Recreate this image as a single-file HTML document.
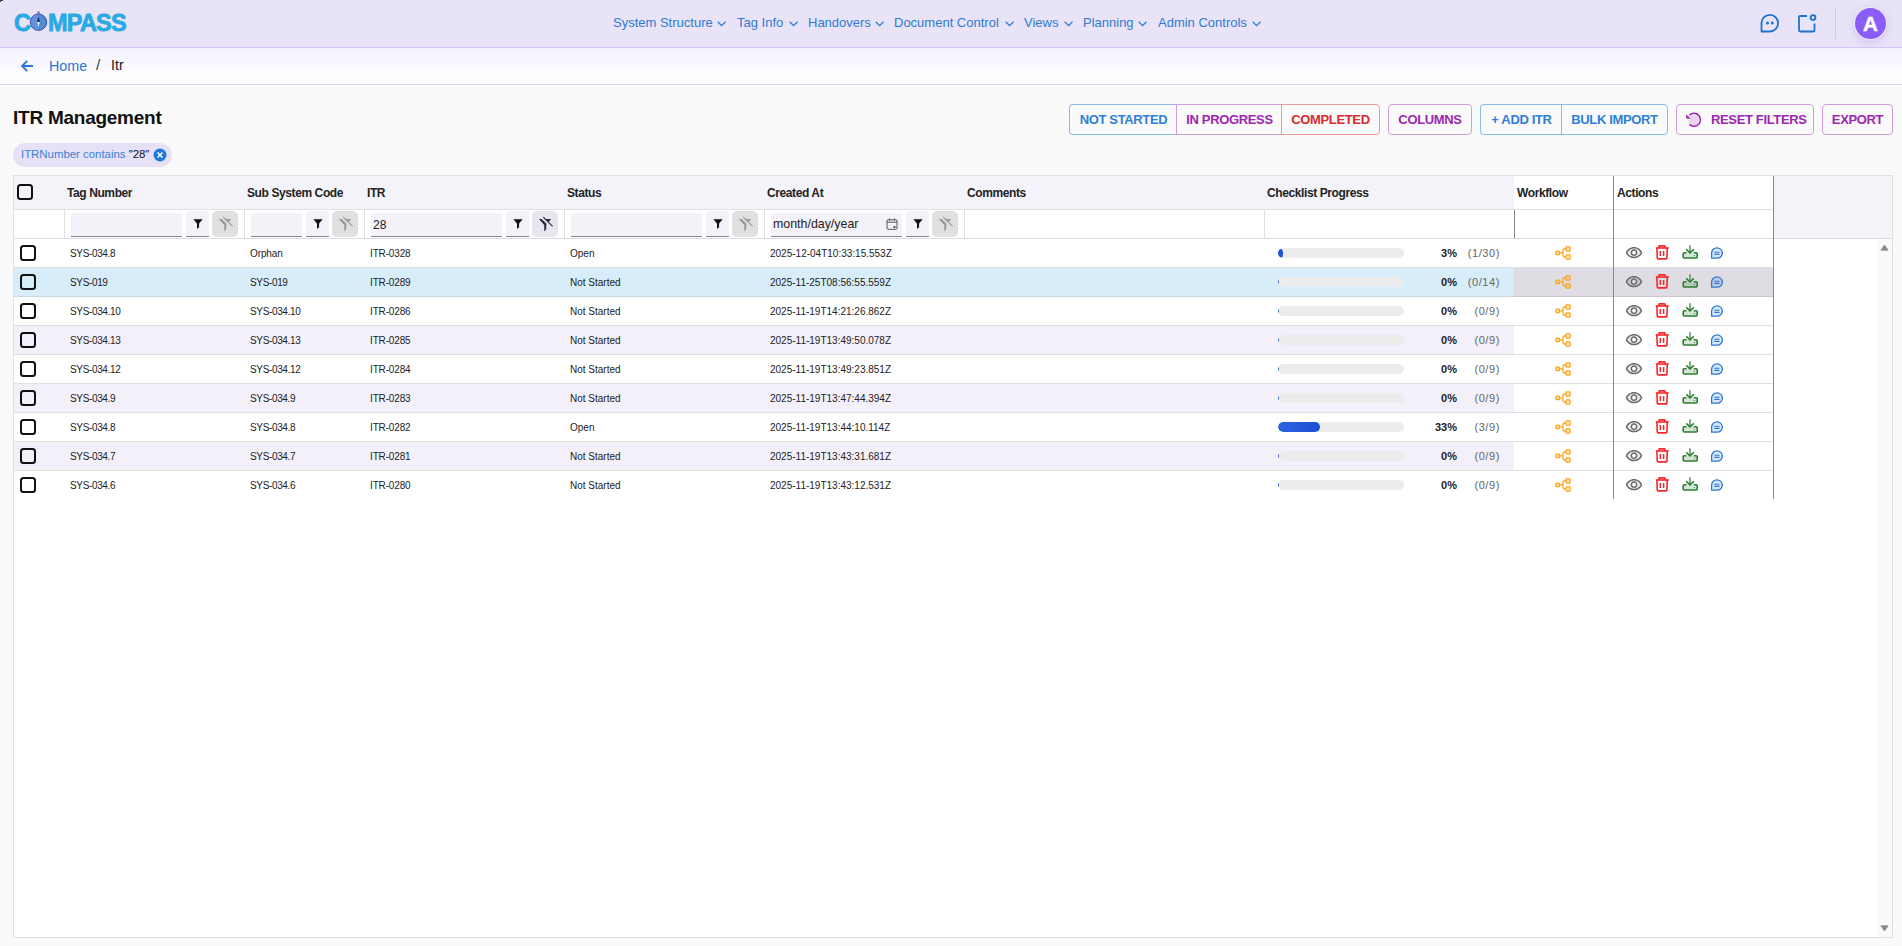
<!DOCTYPE html>
<html><head><meta charset="utf-8"><title>ITR Management</title>
<style>
*{box-sizing:border-box;margin:0;padding:0}
html,body{width:1902px;height:946px;overflow:hidden;background:#fafafa;font-family:"Liberation Sans",sans-serif;color:#1f1f1f}
.a{position:absolute}
#hdr{position:absolute;left:0;top:0;width:1902px;height:48px;background:#e8e3f7;border-bottom:1px solid #d5c6f6}
#crumb{position:absolute;left:0;top:48px;width:1902px;height:37px;background:linear-gradient(180deg,#f5f2fd 0%,#ffffff 100%);border-bottom:1px solid #e2d6f8}
.nav{position:absolute;top:15px;font-size:13px;color:#2f7ad2;white-space:nowrap;line-height:16px}
.chev{position:absolute;top:21px}
.btn{position:absolute;top:104px;height:31px;border:1px solid;font-size:13px;letter-spacing:-0.35px;font-weight:bold;display:flex;align-items:center;justify-content:center;padding-bottom:1px;white-space:nowrap;background:transparent}
.hc{position:absolute;top:0;height:34px;font-size:12px;font-weight:bold;color:#222;letter-spacing:-0.4px;line-height:36px;white-space:nowrap}
.fi{position:absolute;top:2px;height:24px;background:#f4f1f8;border-bottom:1px solid #8a8a8a;border-radius:4px 4px 0 0}
.fb{position:absolute;top:1px;height:26px;width:23px;background:#f4f1f8;border-bottom:1px solid #8a8a8a;border-radius:4px 4px 0 0;display:flex;align-items:center;justify-content:center}
.fc{position:absolute;top:1px;height:26px;width:26px;background:#e0e0e0;border-radius:5px;display:flex;align-items:center;justify-content:center}
.row{position:absolute;left:0;width:1760px;height:29px;border-bottom:1px solid #e0e0e0}
.td{position:absolute;top:0;height:28px;line-height:30px;font-size:10px;letter-spacing:0px;color:#222;white-space:nowrap}
.cb{position:absolute;width:16px;height:16px;border:2px solid #111;border-radius:3.5px}
</style></head>
<body>
<div id="hdr">
<div class="a" style="left:14px;top:10px;font-size:23.5px;font-weight:bold;color:#2aa9e4;letter-spacing:-0.6px;-webkit-text-stroke:0.8px #2aa9e4;line-height:26px;white-space:nowrap">C</div>
<svg class="a" style="left:29px;top:10px" width="19" height="22" viewBox="0 0 19 22">
 <circle cx="9.5" cy="2.6" r="1.5" fill="#8a8aa0"/>
 <circle cx="9.5" cy="12.2" r="8.2" fill="#4a8fd0" stroke="#3b48a8" stroke-width="1"/>
 <path d="M9.5 4.5 A7.7 7.7 0 0 0 9.5 19.9z" fill="#6690dc"/>
 <path d="M9.5 6.5 L11 12 L9.5 17.8 L8 12z" fill="#1d2a5a"/>
 <path d="M8 12 L11 12 L9.5 17.8z" fill="#c8f4ff"/>
</svg>
<div class="a" style="left:48px;top:10px;font-size:23.5px;font-weight:bold;color:#2aa9e4;letter-spacing:-0.8px;-webkit-text-stroke:0.8px #2aa9e4;line-height:26px;white-space:nowrap">MPASS</div>
<div class="nav" style="left:613px">System Structure</div>
<svg class="chev" style="left:717px" width="9" height="6" viewBox="0 0 9 6"><path d="M0.7 0.8l3.9 3.9 3.9-3.9" fill="none" stroke="#2f7ad0" stroke-width="1.3"/></svg>
<div class="nav" style="left:737px">Tag Info</div>
<svg class="chev" style="left:789px" width="9" height="6" viewBox="0 0 9 6"><path d="M0.7 0.8l3.9 3.9 3.9-3.9" fill="none" stroke="#2f7ad0" stroke-width="1.3"/></svg>
<div class="nav" style="left:808px">Handovers</div>
<svg class="chev" style="left:875px" width="9" height="6" viewBox="0 0 9 6"><path d="M0.7 0.8l3.9 3.9 3.9-3.9" fill="none" stroke="#2f7ad0" stroke-width="1.3"/></svg>
<div class="nav" style="left:894px">Document Control</div>
<svg class="chev" style="left:1005px" width="9" height="6" viewBox="0 0 9 6"><path d="M0.7 0.8l3.9 3.9 3.9-3.9" fill="none" stroke="#2f7ad0" stroke-width="1.3"/></svg>
<div class="nav" style="left:1024px">Views</div>
<svg class="chev" style="left:1064px" width="9" height="6" viewBox="0 0 9 6"><path d="M0.7 0.8l3.9 3.9 3.9-3.9" fill="none" stroke="#2f7ad0" stroke-width="1.3"/></svg>
<div class="nav" style="left:1083px">Planning</div>
<svg class="chev" style="left:1138px" width="9" height="6" viewBox="0 0 9 6"><path d="M0.7 0.8l3.9 3.9 3.9-3.9" fill="none" stroke="#2f7ad0" stroke-width="1.3"/></svg>
<div class="nav" style="left:1158px">Admin Controls</div>
<svg class="chev" style="left:1252px" width="9" height="6" viewBox="0 0 9 6"><path d="M0.7 0.8l3.9 3.9 3.9-3.9" fill="none" stroke="#2f7ad0" stroke-width="1.3"/></svg>
<svg class="a" style="left:1760px;top:13px" width="20" height="20" viewBox="0 0 20 20" fill="none" stroke="#1a73d0" stroke-width="1.8"><path d="M1.5 18.5V10A8.3 8.3 0 1 1 9.8 18.5z" stroke-linejoin="round"/><circle cx="7.5" cy="10" r="0.6" fill="#1a73d0"/><circle cx="12.3" cy="10" r="0.6" fill="#1a73d0"/></svg>
<svg class="a" style="left:1797px;top:13px" width="20" height="20" viewBox="0 0 20 20" fill="none" stroke="#1a73d0" stroke-width="1.8" stroke-linejoin="round"><path d="M10 3H3.2Q2 3 2 4.2V17.3Q2 18.5 3.2 18.5H16.3Q17.5 18.5 17.5 17.3V10.5"/><circle cx="16" cy="4.6" r="2.4"/></svg>
<div class="a" style="left:1835px;top:8px;width:1px;height:31px;background:#d4c4f2"></div>
<div class="a" style="left:1855px;top:8px;width:31px;height:31px;border-radius:50%;background:#8b5cf6;box-shadow:0 0 0 1px #f1ebfc,0 2px 8px rgba(130,90,230,0.3);color:#fff;font-weight:bold;font-size:20.5px;line-height:32px;text-align:center;-webkit-text-stroke:0.5px #fff">A</div>
</div>
<div id="crumb">
<svg class="a" style="left:20px;top:11px" width="14" height="14" viewBox="0 0 14 14" fill="none" stroke="#2a76d2" stroke-width="1.8"><path d="M13 7H2.2M7.2 1.8L2 7 7.2 12.2"/></svg>
<div class="a" style="left:49px;top:9px;font-size:14.3px;color:#2a78d4;line-height:18px">Home</div>
<div class="a" style="left:96px;top:8px;font-size:15.5px;color:#444;line-height:18px">/</div>
<div class="a" style="left:111px;top:8px;font-size:14.3px;color:#222;line-height:18px">Itr</div>
</div>
<div class="a" style="left:0;top:0;width:3px;height:1px;background:#3a3a3a"></div><div class="a" style="left:0;top:1px;width:1px;height:1px;background:#555"></div>
<div class="a" style="left:13px;top:107px;font-size:19px;font-weight:bold;color:#111;letter-spacing:-0.25px;line-height:22px;white-space:nowrap">ITR Management</div>
<div class="a" style="left:13px;top:143px;width:159px;height:24px;border-radius:12px;background:#e7e1f7"></div>
<div class="a" style="left:21px;top:147px;font-size:11.4px;line-height:15px;white-space:nowrap;color:#3a7fd0">ITRNumber contains <span style="color:#111">"28"</span></div>
<svg class="a" style="left:153px;top:148px" width="14" height="14" viewBox="0 0 14 14"><circle cx="7" cy="7" r="6.5" fill="#1e7ad6"/><path d="M4.5 4.5l5 5M9.5 4.5l-5 5" stroke="#fff" stroke-width="1.5"/></svg>
<div class="btn" style="left:1069px;width:108px;color:#2f7fd6;border-color:#8bbcec;border-radius:4px 0 0 4px;border-right:none">NOT STARTED</div>
<div class="btn" style="left:1176px;width:106px;color:#9c27b0;border-color:#d29ddd;border-radius:0;border-right:none">IN PROGRESS</div>
<div class="btn" style="left:1281px;width:99px;color:#d32f2f;border-color:#ec9a9a;border-radius:0 4px 4px 0">COMPLETED</div>
<div class="btn" style="left:1388px;width:84px;color:#9c27b0;border-color:#d29ddd;border-radius:4px">COLUMNS</div>
<div class="btn" style="left:1480px;width:82px;color:#2f7fd6;border-color:#8bbcec;border-radius:4px 0 0 4px;border-right:none">+ ADD ITR</div>
<div class="btn" style="left:1561px;width:107px;color:#2f7fd6;border-color:#8bbcec;border-radius:0 4px 4px 0">BULK IMPORT</div>
<div class="btn" style="left:1676px;width:138px;color:#9c27b0;border-color:#d29ddd;border-radius:4px"><svg width="17" height="16" viewBox="0 0 17 16" style="position:absolute;left:8px;top:7px"><circle cx="8.6" cy="8.3" r="5.4" fill="#e9d5ee"/><path d="M4.5 3.1A6.5 6.5 0 1 1 4.3 12.4" fill="none" stroke="#9c27b0" stroke-width="1.5"/><path d="M1.2 2.2L1.3 6.8 5.5 6.4Z" fill="#9c27b0"/></svg><span style="position:absolute;left:34px;top:7px">RESET FILTERS</span></div>
<div class="btn" style="left:1822px;width:71px;color:#9c27b0;border-color:#d29ddd;border-radius:4px">EXPORT</div>
<div class="a" style="left:13px;top:175px;width:1880px;height:763px;background:#fff;border:1px solid #e0e0e0"></div>
<div class="a" style="left:14px;top:176px;width:1878px;height:62px;background:#f5f3fa"></div>
<div class="a" style="left:14px;top:209px;width:1500px;height:29px;background:#fff"></div>
<div class="a" style="left:1514px;top:176px;width:260px;height:62px;background:#fff"></div>
<div class="a" style="left:14px;top:209px;width:1760px;height:1px;background:#e0e0e0"></div>
<div class="a" style="left:14px;top:238px;width:1878px;height:1px;background:#dedae3"></div>
<div class="a" style="left:64px;top:210px;width:1px;height:28px;background:#e0e0e0"></div>
<div class="a" style="left:244px;top:210px;width:1px;height:28px;background:#e0e0e0"></div>
<div class="a" style="left:364px;top:210px;width:1px;height:28px;background:#e0e0e0"></div>
<div class="a" style="left:564px;top:210px;width:1px;height:28px;background:#e0e0e0"></div>
<div class="a" style="left:764px;top:210px;width:1px;height:28px;background:#e0e0e0"></div>
<div class="a" style="left:964px;top:210px;width:1px;height:28px;background:#e0e0e0"></div>
<div class="a" style="left:1264px;top:210px;width:1px;height:28px;background:#e0e0e0"></div>
<div class="a" style="left:1514px;top:210px;width:1px;height:28px;background:#e0e0e0"></div>
<div class="a" style="left:1514px;top:210px;width:1px;height:28px;background:#888"></div>
<div class="hc" style="left:67px;top:175px">Tag Number</div>
<div class="hc" style="left:247px;top:175px">Sub System Code</div>
<div class="hc" style="left:367px;top:175px">ITR</div>
<div class="hc" style="left:567px;top:175px">Status</div>
<div class="hc" style="left:767px;top:175px">Created At</div>
<div class="hc" style="left:967px;top:175px">Comments</div>
<div class="hc" style="left:1267px;top:175px">Checklist Progress</div>
<div class="hc" style="left:1517px;top:175px">Workflow</div>
<div class="hc" style="left:1617px;top:175px">Actions</div>
<div class="cb" style="left:17px;top:184px"></div>
<div class="fi" style="left:71px;top:213px;width:111px">
</div>
<div class="fb" style="left:186px;top:211px"><svg width="12" height="12" viewBox="0 0 12 12"><path d="M1.3 1.2H10.6L7.1 5.6V9.3L5 11V5.6Z" fill="#111"/></svg></div>
<div class="fc" style="left:212px;top:211px;background:#e0e0e0"><svg width="16" height="17" viewBox="0 0 16 17" style="margin-left:1px;margin-top:1px"><path d="M0.9 3.1L3.6 2.9L8.4 7.6L8.2 13.3L6.3 15.5L6.2 9Z" fill="#9a9a9a"/><path d="M7 3.1H13.1L10.7 5.9Z" fill="#9a9a9a"/><path d="M5.3 1.1L14.6 10.4" stroke="#9a9a9a" stroke-width="1.2"/></svg></div>
<div class="fi" style="left:251px;top:213px;width:51px">
</div>
<div class="fb" style="left:306px;top:211px"><svg width="12" height="12" viewBox="0 0 12 12"><path d="M1.3 1.2H10.6L7.1 5.6V9.3L5 11V5.6Z" fill="#111"/></svg></div>
<div class="fc" style="left:332px;top:211px;background:#e0e0e0"><svg width="16" height="17" viewBox="0 0 16 17" style="margin-left:1px;margin-top:1px"><path d="M0.9 3.1L3.6 2.9L8.4 7.6L8.2 13.3L6.3 15.5L6.2 9Z" fill="#9a9a9a"/><path d="M7 3.1H13.1L10.7 5.9Z" fill="#9a9a9a"/><path d="M5.3 1.1L14.6 10.4" stroke="#9a9a9a" stroke-width="1.2"/></svg></div>
<div class="fi" style="left:371px;top:213px;width:131px">
<span style="position:absolute;left:2px;top:4px;font-size:12px;color:#222;line-height:16px">28</span>
</div>
<div class="fb" style="left:506px;top:211px"><svg width="12" height="12" viewBox="0 0 12 12"><path d="M1.3 1.2H10.6L7.1 5.6V9.3L5 11V5.6Z" fill="#111"/></svg></div>
<div class="fc" style="left:532px;top:211px;background:#e9e5ee"><svg width="16" height="17" viewBox="0 0 16 17" style="margin-left:1px;margin-top:1px"><path d="M0.9 3.1L3.6 2.9L8.4 7.6L8.2 13.3L6.3 15.5L6.2 9Z" fill="#2b2b3b"/><path d="M7 3.1H13.1L10.7 5.9Z" fill="#2b2b3b"/><path d="M5.3 1.1L14.6 10.4" stroke="#2b2b3b" stroke-width="1.2"/></svg></div>
<div class="fi" style="left:571px;top:213px;width:131px">
</div>
<div class="fb" style="left:706px;top:211px"><svg width="12" height="12" viewBox="0 0 12 12"><path d="M1.3 1.2H10.6L7.1 5.6V9.3L5 11V5.6Z" fill="#111"/></svg></div>
<div class="fc" style="left:732px;top:211px;background:#e0e0e0"><svg width="16" height="17" viewBox="0 0 16 17" style="margin-left:1px;margin-top:1px"><path d="M0.9 3.1L3.6 2.9L8.4 7.6L8.2 13.3L6.3 15.5L6.2 9Z" fill="#9a9a9a"/><path d="M7 3.1H13.1L10.7 5.9Z" fill="#9a9a9a"/><path d="M5.3 1.1L14.6 10.4" stroke="#9a9a9a" stroke-width="1.2"/></svg></div>
<div class="fi" style="left:771px;top:213px;width:131px">
<span style="position:absolute;left:2px;top:3px;font-size:12.4px;color:#222;line-height:16px">month/day/year</span>
<svg style="position:absolute;left:115px;top:5px" width="12" height="12" viewBox="0 0 12 12" fill="none" stroke="#555" stroke-width="1"><rect x="1" y="1.8" width="10" height="9.5" rx="1"/><path d="M1 4.2h10M3.5 0.5v2M8.5 0.5v2"/><rect x="7.5" y="8" width="2" height="2" fill="#555" stroke="none"/></svg>
</div>
<div class="fb" style="left:906px;top:211px"><svg width="12" height="12" viewBox="0 0 12 12"><path d="M1.3 1.2H10.6L7.1 5.6V9.3L5 11V5.6Z" fill="#111"/></svg></div>
<div class="fc" style="left:932px;top:211px;background:#e0e0e0"><svg width="16" height="17" viewBox="0 0 16 17" style="margin-left:1px;margin-top:1px"><path d="M0.9 3.1L3.6 2.9L8.4 7.6L8.2 13.3L6.3 15.5L6.2 9Z" fill="#9a9a9a"/><path d="M7 3.1H13.1L10.7 5.9Z" fill="#9a9a9a"/><path d="M5.3 1.1L14.6 10.4" stroke="#9a9a9a" stroke-width="1.2"/></svg></div>
<div class="a" style="left:14px;top:239px;width:1500px;height:29px;background:#fff;border-bottom:1px solid #e0e0e0"></div>
<div class="a" style="left:1514px;top:239px;width:260px;height:29px;background:#fff;border-bottom:1px solid #e0e0e0"></div>
<div class="cb" style="left:20px;top:245px"></div>
<div class="td" style="left:70px;top:239px;letter-spacing:-0.35px">SYS-034.8</div>
<div class="td" style="left:250px;top:239px;letter-spacing:-0.1px">Orphan</div>
<div class="td" style="left:370px;top:239px;letter-spacing:-0.15px">ITR-0328</div>
<div class="td" style="left:570px;top:239px;letter-spacing:0">Open</div>
<div class="td" style="left:770px;top:239px;letter-spacing:0">2025-12-04T10:33:15.553Z</div>
<div class="a" style="left:1278px;top:248px;width:126px;height:10px;border-radius:5px;background:#ececec;overflow:hidden"><div style="width:5px;height:9px;margin-top:0.5px;border-radius:50%;background:#1f4fe0"></div></div>
<div class="a" style="left:1407px;width:50px;top:239px;height:28px;line-height:28px;font-size:11px;font-weight:bold;color:#222;text-align:right">3%</div>
<div class="a" style="left:1450px;width:50px;top:239px;height:28px;line-height:28px;font-size:11px;letter-spacing:0.6px;color:#666;text-align:right;margin-right:-0.6px">(1/30)</div>
<svg class="a" style="left:1555px;top:245px" width="17" height="15" viewBox="0 0 17 15" fill="none" stroke="#ffa414" stroke-width="1.3"><rect x="1" y="6.2" width="3.4" height="3.4" rx="0.6" fill="rgba(255,164,20,0.22)"/><rect x="10.85" y="1.85" width="4.3" height="4.3" rx="0.8" fill="rgba(255,164,20,0.22)"/><rect x="10.85" y="9.85" width="4.3" height="4.3" rx="0.8" fill="rgba(255,164,20,0.22)"/><path d="M4.4 7.9H8M10.85 4H9.4Q8 4 8 5.4V10.6Q8 12 9.4 12H10.85"/></svg>
<svg class="a" style="left:1625px;top:244px" width="18" height="18" viewBox="0 0 24 24"><path fill="rgba(0,0,0,0.09)" fill-rule="evenodd" d="M12 6c3.79 0 7.17 2.13 8.82 5.5C19.17 14.87 15.79 17 12 17s-7.17-2.13-8.82-5.5C4.83 8.13 8.21 6 12 6zM12 8.2a3.3 3.3 0 1 0 0.01 0z"/><path fill="#6a6a6a" d="M12 6c3.79 0 7.17 2.13 8.82 5.5C19.17 14.87 15.79 17 12 17s-7.17-2.13-8.82-5.5C4.83 8.13 8.21 6 12 6m0-2C7 4 2.73 7.11 1 11.5 2.73 15.89 7 19 12 19s9.27-3.11 11-7.5C21.27 7.11 17 4 12 4zm0 5c1.38 0 2.5 1.12 2.5 2.5S13.38 14 12 14s-2.5-1.12-2.5-2.5S10.62 9 12 9m0-2c-2.48 0-4.5 2.02-4.5 4.5S9.520 16 12 16s4.5-2.02 4.5-4.5S14.48 7 12 7z"/></svg>
<svg class="a" style="left:1655px;top:244px" width="15" height="17" viewBox="0 0 15 17" fill="none" stroke="#f8262b" stroke-width="1.6" stroke-linejoin="round"><path d="M4 4V2.4Q4 1.9 4.5 1.9H9.5Q10 1.9 10 2.4V4"/><path d="M0.8 4H13.8"/><path d="M1.9 4L2.3 14.2Q2.4 14.9 3.1 14.9H11.1Q11.8 14.9 11.9 14.2L12.3 4"/><path d="M5.3 7V11.9M8.6 7V11.9" stroke-width="1.5"/></svg>
<svg class="a" style="left:1682px;top:245px" width="17" height="15" viewBox="0 0 17 15"><path d="M1.2 7.7H15.2V13H1.2Z" fill="rgba(46,125,50,0.2)"/><path d="M4.6 7.7H2.2Q1.2 7.7 1.2 8.7V12Q1.2 13 2.2 13H14.2Q15.2 13 15.2 12V8.7Q15.2 7.7 14.2 7.7H11.7" fill="none" stroke="#2e7d32" stroke-width="1.6"/><path d="M8 0.2V7.6" stroke="#5a9a5d" stroke-width="1.6"/><path d="M4.2 4.4L8 7.9 11.8 4.4" fill="none" stroke="#2e7d32" stroke-width="1.5"/><path d="M11.4 10.2L13 10.2 12.8 11.6Z" fill="#2e7d32"/></svg>
<svg class="a" style="left:1710px;top:247px" width="14" height="13" viewBox="0 0 14 13"><path d="M1.6 11.2V6.1A5.4 5.15 0 1 1 7 11.2Z" fill="rgba(42,120,214,0.18)" stroke="#2a78d6" stroke-width="1.3" stroke-linejoin="round"/><path d="M4.3 5.3H9.5M4.3 7.4H9.5" stroke="#2a78d6" stroke-width="1.1"/></svg>
<div class="a" style="left:14px;top:268px;width:1500px;height:29px;background:#d8edfa;border-bottom:1px solid #c9dae4"></div>
<div class="a" style="left:1514px;top:268px;width:260px;height:29px;background:#e0dce3;border-bottom:1px solid #cbc7cf"></div>
<div class="cb" style="left:20px;top:274px"></div>
<div class="td" style="left:70px;top:268px;letter-spacing:-0.35px">SYS-019</div>
<div class="td" style="left:250px;top:268px;letter-spacing:-0.35px">SYS-019</div>
<div class="td" style="left:370px;top:268px;letter-spacing:-0.15px">ITR-0289</div>
<div class="td" style="left:570px;top:268px;letter-spacing:0">Not Started</div>
<div class="td" style="left:770px;top:268px;letter-spacing:0">2025-11-25T08:56:55.559Z</div>
<div class="a" style="left:1278px;top:277px;width:126px;height:10px;border-radius:5px;background:#ececec;overflow:hidden"><div style="width:1.4px;height:4.6px;margin-top:2.7px;border-radius:50%;background:#3b66e2"></div></div>
<div class="a" style="left:1407px;width:50px;top:268px;height:28px;line-height:28px;font-size:11px;font-weight:bold;color:#222;text-align:right">0%</div>
<div class="a" style="left:1450px;width:50px;top:268px;height:28px;line-height:28px;font-size:11px;letter-spacing:0.6px;color:#666;text-align:right;margin-right:-0.6px">(0/14)</div>
<svg class="a" style="left:1555px;top:274px" width="17" height="15" viewBox="0 0 17 15" fill="none" stroke="#ffa414" stroke-width="1.3"><rect x="1" y="6.2" width="3.4" height="3.4" rx="0.6" fill="rgba(255,164,20,0.22)"/><rect x="10.85" y="1.85" width="4.3" height="4.3" rx="0.8" fill="rgba(255,164,20,0.22)"/><rect x="10.85" y="9.85" width="4.3" height="4.3" rx="0.8" fill="rgba(255,164,20,0.22)"/><path d="M4.4 7.9H8M10.85 4H9.4Q8 4 8 5.4V10.6Q8 12 9.4 12H10.85"/></svg>
<svg class="a" style="left:1625px;top:273px" width="18" height="18" viewBox="0 0 24 24"><path fill="rgba(0,0,0,0.09)" fill-rule="evenodd" d="M12 6c3.79 0 7.17 2.13 8.82 5.5C19.17 14.87 15.79 17 12 17s-7.17-2.13-8.82-5.5C4.83 8.13 8.21 6 12 6zM12 8.2a3.3 3.3 0 1 0 0.01 0z"/><path fill="#6a6a6a" d="M12 6c3.79 0 7.17 2.13 8.82 5.5C19.17 14.87 15.79 17 12 17s-7.17-2.13-8.82-5.5C4.83 8.13 8.21 6 12 6m0-2C7 4 2.73 7.11 1 11.5 2.73 15.89 7 19 12 19s9.27-3.11 11-7.5C21.27 7.11 17 4 12 4zm0 5c1.38 0 2.5 1.12 2.5 2.5S13.38 14 12 14s-2.5-1.12-2.5-2.5S10.62 9 12 9m0-2c-2.48 0-4.5 2.02-4.5 4.5S9.520 16 12 16s4.5-2.02 4.5-4.5S14.48 7 12 7z"/></svg>
<svg class="a" style="left:1655px;top:273px" width="15" height="17" viewBox="0 0 15 17" fill="none" stroke="#f8262b" stroke-width="1.6" stroke-linejoin="round"><path d="M4 4V2.4Q4 1.9 4.5 1.9H9.5Q10 1.9 10 2.4V4"/><path d="M0.8 4H13.8"/><path d="M1.9 4L2.3 14.2Q2.4 14.9 3.1 14.9H11.1Q11.8 14.9 11.9 14.2L12.3 4"/><path d="M5.3 7V11.9M8.6 7V11.9" stroke-width="1.5"/></svg>
<svg class="a" style="left:1682px;top:274px" width="17" height="15" viewBox="0 0 17 15"><path d="M1.2 7.7H15.2V13H1.2Z" fill="rgba(46,125,50,0.2)"/><path d="M4.6 7.7H2.2Q1.2 7.7 1.2 8.7V12Q1.2 13 2.2 13H14.2Q15.2 13 15.2 12V8.7Q15.2 7.7 14.2 7.7H11.7" fill="none" stroke="#2e7d32" stroke-width="1.6"/><path d="M8 0.2V7.6" stroke="#5a9a5d" stroke-width="1.6"/><path d="M4.2 4.4L8 7.9 11.8 4.4" fill="none" stroke="#2e7d32" stroke-width="1.5"/><path d="M11.4 10.2L13 10.2 12.8 11.6Z" fill="#2e7d32"/></svg>
<svg class="a" style="left:1710px;top:276px" width="14" height="13" viewBox="0 0 14 13"><path d="M1.6 11.2V6.1A5.4 5.15 0 1 1 7 11.2Z" fill="rgba(42,120,214,0.18)" stroke="#2a78d6" stroke-width="1.3" stroke-linejoin="round"/><path d="M4.3 5.3H9.5M4.3 7.4H9.5" stroke="#2a78d6" stroke-width="1.1"/></svg>
<div class="a" style="left:14px;top:297px;width:1500px;height:29px;background:#fff;border-bottom:1px solid #e0e0e0"></div>
<div class="a" style="left:1514px;top:297px;width:260px;height:29px;background:#fff;border-bottom:1px solid #e0e0e0"></div>
<div class="cb" style="left:20px;top:303px"></div>
<div class="td" style="left:70px;top:297px;letter-spacing:-0.35px">SYS-034.10</div>
<div class="td" style="left:250px;top:297px;letter-spacing:-0.35px">SYS-034.10</div>
<div class="td" style="left:370px;top:297px;letter-spacing:-0.15px">ITR-0286</div>
<div class="td" style="left:570px;top:297px;letter-spacing:0">Not Started</div>
<div class="td" style="left:770px;top:297px;letter-spacing:0">2025-11-19T14:21:26.862Z</div>
<div class="a" style="left:1278px;top:306px;width:126px;height:10px;border-radius:5px;background:#ececec;overflow:hidden"><div style="width:1.4px;height:4.6px;margin-top:2.7px;border-radius:50%;background:#3b66e2"></div></div>
<div class="a" style="left:1407px;width:50px;top:297px;height:28px;line-height:28px;font-size:11px;font-weight:bold;color:#222;text-align:right">0%</div>
<div class="a" style="left:1450px;width:50px;top:297px;height:28px;line-height:28px;font-size:11px;letter-spacing:0.6px;color:#666;text-align:right;margin-right:-0.6px">(0/9)</div>
<svg class="a" style="left:1555px;top:303px" width="17" height="15" viewBox="0 0 17 15" fill="none" stroke="#ffa414" stroke-width="1.3"><rect x="1" y="6.2" width="3.4" height="3.4" rx="0.6" fill="rgba(255,164,20,0.22)"/><rect x="10.85" y="1.85" width="4.3" height="4.3" rx="0.8" fill="rgba(255,164,20,0.22)"/><rect x="10.85" y="9.85" width="4.3" height="4.3" rx="0.8" fill="rgba(255,164,20,0.22)"/><path d="M4.4 7.9H8M10.85 4H9.4Q8 4 8 5.4V10.6Q8 12 9.4 12H10.85"/></svg>
<svg class="a" style="left:1625px;top:302px" width="18" height="18" viewBox="0 0 24 24"><path fill="rgba(0,0,0,0.09)" fill-rule="evenodd" d="M12 6c3.79 0 7.17 2.13 8.82 5.5C19.17 14.87 15.79 17 12 17s-7.17-2.13-8.82-5.5C4.83 8.13 8.21 6 12 6zM12 8.2a3.3 3.3 0 1 0 0.01 0z"/><path fill="#6a6a6a" d="M12 6c3.79 0 7.17 2.13 8.82 5.5C19.17 14.87 15.79 17 12 17s-7.17-2.13-8.82-5.5C4.83 8.13 8.21 6 12 6m0-2C7 4 2.73 7.11 1 11.5 2.73 15.89 7 19 12 19s9.27-3.11 11-7.5C21.27 7.11 17 4 12 4zm0 5c1.38 0 2.5 1.12 2.5 2.5S13.38 14 12 14s-2.5-1.12-2.5-2.5S10.62 9 12 9m0-2c-2.48 0-4.5 2.02-4.5 4.5S9.520 16 12 16s4.5-2.02 4.5-4.5S14.48 7 12 7z"/></svg>
<svg class="a" style="left:1655px;top:302px" width="15" height="17" viewBox="0 0 15 17" fill="none" stroke="#f8262b" stroke-width="1.6" stroke-linejoin="round"><path d="M4 4V2.4Q4 1.9 4.5 1.9H9.5Q10 1.9 10 2.4V4"/><path d="M0.8 4H13.8"/><path d="M1.9 4L2.3 14.2Q2.4 14.9 3.1 14.9H11.1Q11.8 14.9 11.9 14.2L12.3 4"/><path d="M5.3 7V11.9M8.6 7V11.9" stroke-width="1.5"/></svg>
<svg class="a" style="left:1682px;top:303px" width="17" height="15" viewBox="0 0 17 15"><path d="M1.2 7.7H15.2V13H1.2Z" fill="rgba(46,125,50,0.2)"/><path d="M4.6 7.7H2.2Q1.2 7.7 1.2 8.7V12Q1.2 13 2.2 13H14.2Q15.2 13 15.2 12V8.7Q15.2 7.7 14.2 7.7H11.7" fill="none" stroke="#2e7d32" stroke-width="1.6"/><path d="M8 0.2V7.6" stroke="#5a9a5d" stroke-width="1.6"/><path d="M4.2 4.4L8 7.9 11.8 4.4" fill="none" stroke="#2e7d32" stroke-width="1.5"/><path d="M11.4 10.2L13 10.2 12.8 11.6Z" fill="#2e7d32"/></svg>
<svg class="a" style="left:1710px;top:305px" width="14" height="13" viewBox="0 0 14 13"><path d="M1.6 11.2V6.1A5.4 5.15 0 1 1 7 11.2Z" fill="rgba(42,120,214,0.18)" stroke="#2a78d6" stroke-width="1.3" stroke-linejoin="round"/><path d="M4.3 5.3H9.5M4.3 7.4H9.5" stroke="#2a78d6" stroke-width="1.1"/></svg>
<div class="a" style="left:14px;top:326px;width:1500px;height:29px;background:#f3f0fa;border-bottom:1px solid #e0e0e0"></div>
<div class="a" style="left:1514px;top:326px;width:260px;height:29px;background:#fff;border-bottom:1px solid #e0e0e0"></div>
<div class="cb" style="left:20px;top:332px"></div>
<div class="td" style="left:70px;top:326px;letter-spacing:-0.35px">SYS-034.13</div>
<div class="td" style="left:250px;top:326px;letter-spacing:-0.35px">SYS-034.13</div>
<div class="td" style="left:370px;top:326px;letter-spacing:-0.15px">ITR-0285</div>
<div class="td" style="left:570px;top:326px;letter-spacing:0">Not Started</div>
<div class="td" style="left:770px;top:326px;letter-spacing:0">2025-11-19T13:49:50.078Z</div>
<div class="a" style="left:1278px;top:335px;width:126px;height:10px;border-radius:5px;background:#ececec;overflow:hidden"><div style="width:1.4px;height:4.6px;margin-top:2.7px;border-radius:50%;background:#3b66e2"></div></div>
<div class="a" style="left:1407px;width:50px;top:326px;height:28px;line-height:28px;font-size:11px;font-weight:bold;color:#222;text-align:right">0%</div>
<div class="a" style="left:1450px;width:50px;top:326px;height:28px;line-height:28px;font-size:11px;letter-spacing:0.6px;color:#666;text-align:right;margin-right:-0.6px">(0/9)</div>
<svg class="a" style="left:1555px;top:332px" width="17" height="15" viewBox="0 0 17 15" fill="none" stroke="#ffa414" stroke-width="1.3"><rect x="1" y="6.2" width="3.4" height="3.4" rx="0.6" fill="rgba(255,164,20,0.22)"/><rect x="10.85" y="1.85" width="4.3" height="4.3" rx="0.8" fill="rgba(255,164,20,0.22)"/><rect x="10.85" y="9.85" width="4.3" height="4.3" rx="0.8" fill="rgba(255,164,20,0.22)"/><path d="M4.4 7.9H8M10.85 4H9.4Q8 4 8 5.4V10.6Q8 12 9.4 12H10.85"/></svg>
<svg class="a" style="left:1625px;top:331px" width="18" height="18" viewBox="0 0 24 24"><path fill="rgba(0,0,0,0.09)" fill-rule="evenodd" d="M12 6c3.79 0 7.17 2.13 8.82 5.5C19.17 14.87 15.79 17 12 17s-7.17-2.13-8.82-5.5C4.83 8.13 8.21 6 12 6zM12 8.2a3.3 3.3 0 1 0 0.01 0z"/><path fill="#6a6a6a" d="M12 6c3.79 0 7.17 2.13 8.82 5.5C19.17 14.87 15.79 17 12 17s-7.17-2.13-8.82-5.5C4.83 8.13 8.21 6 12 6m0-2C7 4 2.73 7.11 1 11.5 2.73 15.89 7 19 12 19s9.27-3.11 11-7.5C21.27 7.11 17 4 12 4zm0 5c1.38 0 2.5 1.12 2.5 2.5S13.38 14 12 14s-2.5-1.12-2.5-2.5S10.62 9 12 9m0-2c-2.48 0-4.5 2.02-4.5 4.5S9.520 16 12 16s4.5-2.02 4.5-4.5S14.48 7 12 7z"/></svg>
<svg class="a" style="left:1655px;top:331px" width="15" height="17" viewBox="0 0 15 17" fill="none" stroke="#f8262b" stroke-width="1.6" stroke-linejoin="round"><path d="M4 4V2.4Q4 1.9 4.5 1.9H9.5Q10 1.9 10 2.4V4"/><path d="M0.8 4H13.8"/><path d="M1.9 4L2.3 14.2Q2.4 14.9 3.1 14.9H11.1Q11.8 14.9 11.9 14.2L12.3 4"/><path d="M5.3 7V11.9M8.6 7V11.9" stroke-width="1.5"/></svg>
<svg class="a" style="left:1682px;top:332px" width="17" height="15" viewBox="0 0 17 15"><path d="M1.2 7.7H15.2V13H1.2Z" fill="rgba(46,125,50,0.2)"/><path d="M4.6 7.7H2.2Q1.2 7.7 1.2 8.7V12Q1.2 13 2.2 13H14.2Q15.2 13 15.2 12V8.7Q15.2 7.7 14.2 7.7H11.7" fill="none" stroke="#2e7d32" stroke-width="1.6"/><path d="M8 0.2V7.6" stroke="#5a9a5d" stroke-width="1.6"/><path d="M4.2 4.4L8 7.9 11.8 4.4" fill="none" stroke="#2e7d32" stroke-width="1.5"/><path d="M11.4 10.2L13 10.2 12.8 11.6Z" fill="#2e7d32"/></svg>
<svg class="a" style="left:1710px;top:334px" width="14" height="13" viewBox="0 0 14 13"><path d="M1.6 11.2V6.1A5.4 5.15 0 1 1 7 11.2Z" fill="rgba(42,120,214,0.18)" stroke="#2a78d6" stroke-width="1.3" stroke-linejoin="round"/><path d="M4.3 5.3H9.5M4.3 7.4H9.5" stroke="#2a78d6" stroke-width="1.1"/></svg>
<div class="a" style="left:14px;top:355px;width:1500px;height:29px;background:#fff;border-bottom:1px solid #e0e0e0"></div>
<div class="a" style="left:1514px;top:355px;width:260px;height:29px;background:#fff;border-bottom:1px solid #e0e0e0"></div>
<div class="cb" style="left:20px;top:361px"></div>
<div class="td" style="left:70px;top:355px;letter-spacing:-0.35px">SYS-034.12</div>
<div class="td" style="left:250px;top:355px;letter-spacing:-0.35px">SYS-034.12</div>
<div class="td" style="left:370px;top:355px;letter-spacing:-0.15px">ITR-0284</div>
<div class="td" style="left:570px;top:355px;letter-spacing:0">Not Started</div>
<div class="td" style="left:770px;top:355px;letter-spacing:0">2025-11-19T13:49:23.851Z</div>
<div class="a" style="left:1278px;top:364px;width:126px;height:10px;border-radius:5px;background:#ececec;overflow:hidden"><div style="width:1.4px;height:4.6px;margin-top:2.7px;border-radius:50%;background:#3b66e2"></div></div>
<div class="a" style="left:1407px;width:50px;top:355px;height:28px;line-height:28px;font-size:11px;font-weight:bold;color:#222;text-align:right">0%</div>
<div class="a" style="left:1450px;width:50px;top:355px;height:28px;line-height:28px;font-size:11px;letter-spacing:0.6px;color:#666;text-align:right;margin-right:-0.6px">(0/9)</div>
<svg class="a" style="left:1555px;top:361px" width="17" height="15" viewBox="0 0 17 15" fill="none" stroke="#ffa414" stroke-width="1.3"><rect x="1" y="6.2" width="3.4" height="3.4" rx="0.6" fill="rgba(255,164,20,0.22)"/><rect x="10.85" y="1.85" width="4.3" height="4.3" rx="0.8" fill="rgba(255,164,20,0.22)"/><rect x="10.85" y="9.85" width="4.3" height="4.3" rx="0.8" fill="rgba(255,164,20,0.22)"/><path d="M4.4 7.9H8M10.85 4H9.4Q8 4 8 5.4V10.6Q8 12 9.4 12H10.85"/></svg>
<svg class="a" style="left:1625px;top:360px" width="18" height="18" viewBox="0 0 24 24"><path fill="rgba(0,0,0,0.09)" fill-rule="evenodd" d="M12 6c3.79 0 7.17 2.13 8.82 5.5C19.17 14.87 15.79 17 12 17s-7.17-2.13-8.82-5.5C4.83 8.13 8.21 6 12 6zM12 8.2a3.3 3.3 0 1 0 0.01 0z"/><path fill="#6a6a6a" d="M12 6c3.79 0 7.17 2.13 8.82 5.5C19.17 14.87 15.79 17 12 17s-7.17-2.13-8.82-5.5C4.83 8.13 8.21 6 12 6m0-2C7 4 2.73 7.11 1 11.5 2.73 15.89 7 19 12 19s9.27-3.11 11-7.5C21.27 7.11 17 4 12 4zm0 5c1.38 0 2.5 1.12 2.5 2.5S13.38 14 12 14s-2.5-1.12-2.5-2.5S10.62 9 12 9m0-2c-2.48 0-4.5 2.02-4.5 4.5S9.520 16 12 16s4.5-2.02 4.5-4.5S14.48 7 12 7z"/></svg>
<svg class="a" style="left:1655px;top:360px" width="15" height="17" viewBox="0 0 15 17" fill="none" stroke="#f8262b" stroke-width="1.6" stroke-linejoin="round"><path d="M4 4V2.4Q4 1.9 4.5 1.9H9.5Q10 1.9 10 2.4V4"/><path d="M0.8 4H13.8"/><path d="M1.9 4L2.3 14.2Q2.4 14.9 3.1 14.9H11.1Q11.8 14.9 11.9 14.2L12.3 4"/><path d="M5.3 7V11.9M8.6 7V11.9" stroke-width="1.5"/></svg>
<svg class="a" style="left:1682px;top:361px" width="17" height="15" viewBox="0 0 17 15"><path d="M1.2 7.7H15.2V13H1.2Z" fill="rgba(46,125,50,0.2)"/><path d="M4.6 7.7H2.2Q1.2 7.7 1.2 8.7V12Q1.2 13 2.2 13H14.2Q15.2 13 15.2 12V8.7Q15.2 7.7 14.2 7.7H11.7" fill="none" stroke="#2e7d32" stroke-width="1.6"/><path d="M8 0.2V7.6" stroke="#5a9a5d" stroke-width="1.6"/><path d="M4.2 4.4L8 7.9 11.8 4.4" fill="none" stroke="#2e7d32" stroke-width="1.5"/><path d="M11.4 10.2L13 10.2 12.8 11.6Z" fill="#2e7d32"/></svg>
<svg class="a" style="left:1710px;top:363px" width="14" height="13" viewBox="0 0 14 13"><path d="M1.6 11.2V6.1A5.4 5.15 0 1 1 7 11.2Z" fill="rgba(42,120,214,0.18)" stroke="#2a78d6" stroke-width="1.3" stroke-linejoin="round"/><path d="M4.3 5.3H9.5M4.3 7.4H9.5" stroke="#2a78d6" stroke-width="1.1"/></svg>
<div class="a" style="left:14px;top:384px;width:1500px;height:29px;background:#f3f0fa;border-bottom:1px solid #e0e0e0"></div>
<div class="a" style="left:1514px;top:384px;width:260px;height:29px;background:#fff;border-bottom:1px solid #e0e0e0"></div>
<div class="cb" style="left:20px;top:390px"></div>
<div class="td" style="left:70px;top:384px;letter-spacing:-0.35px">SYS-034.9</div>
<div class="td" style="left:250px;top:384px;letter-spacing:-0.35px">SYS-034.9</div>
<div class="td" style="left:370px;top:384px;letter-spacing:-0.15px">ITR-0283</div>
<div class="td" style="left:570px;top:384px;letter-spacing:0">Not Started</div>
<div class="td" style="left:770px;top:384px;letter-spacing:0">2025-11-19T13:47:44.394Z</div>
<div class="a" style="left:1278px;top:393px;width:126px;height:10px;border-radius:5px;background:#ececec;overflow:hidden"><div style="width:1.4px;height:4.6px;margin-top:2.7px;border-radius:50%;background:#3b66e2"></div></div>
<div class="a" style="left:1407px;width:50px;top:384px;height:28px;line-height:28px;font-size:11px;font-weight:bold;color:#222;text-align:right">0%</div>
<div class="a" style="left:1450px;width:50px;top:384px;height:28px;line-height:28px;font-size:11px;letter-spacing:0.6px;color:#666;text-align:right;margin-right:-0.6px">(0/9)</div>
<svg class="a" style="left:1555px;top:390px" width="17" height="15" viewBox="0 0 17 15" fill="none" stroke="#ffa414" stroke-width="1.3"><rect x="1" y="6.2" width="3.4" height="3.4" rx="0.6" fill="rgba(255,164,20,0.22)"/><rect x="10.85" y="1.85" width="4.3" height="4.3" rx="0.8" fill="rgba(255,164,20,0.22)"/><rect x="10.85" y="9.85" width="4.3" height="4.3" rx="0.8" fill="rgba(255,164,20,0.22)"/><path d="M4.4 7.9H8M10.85 4H9.4Q8 4 8 5.4V10.6Q8 12 9.4 12H10.85"/></svg>
<svg class="a" style="left:1625px;top:389px" width="18" height="18" viewBox="0 0 24 24"><path fill="rgba(0,0,0,0.09)" fill-rule="evenodd" d="M12 6c3.79 0 7.17 2.13 8.82 5.5C19.17 14.87 15.79 17 12 17s-7.17-2.13-8.82-5.5C4.83 8.13 8.21 6 12 6zM12 8.2a3.3 3.3 0 1 0 0.01 0z"/><path fill="#6a6a6a" d="M12 6c3.79 0 7.17 2.13 8.82 5.5C19.17 14.87 15.79 17 12 17s-7.17-2.13-8.82-5.5C4.83 8.13 8.21 6 12 6m0-2C7 4 2.73 7.11 1 11.5 2.73 15.89 7 19 12 19s9.27-3.11 11-7.5C21.27 7.11 17 4 12 4zm0 5c1.38 0 2.5 1.12 2.5 2.5S13.38 14 12 14s-2.5-1.12-2.5-2.5S10.62 9 12 9m0-2c-2.48 0-4.5 2.02-4.5 4.5S9.520 16 12 16s4.5-2.02 4.5-4.5S14.48 7 12 7z"/></svg>
<svg class="a" style="left:1655px;top:389px" width="15" height="17" viewBox="0 0 15 17" fill="none" stroke="#f8262b" stroke-width="1.6" stroke-linejoin="round"><path d="M4 4V2.4Q4 1.9 4.5 1.9H9.5Q10 1.9 10 2.4V4"/><path d="M0.8 4H13.8"/><path d="M1.9 4L2.3 14.2Q2.4 14.9 3.1 14.9H11.1Q11.8 14.9 11.9 14.2L12.3 4"/><path d="M5.3 7V11.9M8.6 7V11.9" stroke-width="1.5"/></svg>
<svg class="a" style="left:1682px;top:390px" width="17" height="15" viewBox="0 0 17 15"><path d="M1.2 7.7H15.2V13H1.2Z" fill="rgba(46,125,50,0.2)"/><path d="M4.6 7.7H2.2Q1.2 7.7 1.2 8.7V12Q1.2 13 2.2 13H14.2Q15.2 13 15.2 12V8.7Q15.2 7.7 14.2 7.7H11.7" fill="none" stroke="#2e7d32" stroke-width="1.6"/><path d="M8 0.2V7.6" stroke="#5a9a5d" stroke-width="1.6"/><path d="M4.2 4.4L8 7.9 11.8 4.4" fill="none" stroke="#2e7d32" stroke-width="1.5"/><path d="M11.4 10.2L13 10.2 12.8 11.6Z" fill="#2e7d32"/></svg>
<svg class="a" style="left:1710px;top:392px" width="14" height="13" viewBox="0 0 14 13"><path d="M1.6 11.2V6.1A5.4 5.15 0 1 1 7 11.2Z" fill="rgba(42,120,214,0.18)" stroke="#2a78d6" stroke-width="1.3" stroke-linejoin="round"/><path d="M4.3 5.3H9.5M4.3 7.4H9.5" stroke="#2a78d6" stroke-width="1.1"/></svg>
<div class="a" style="left:14px;top:413px;width:1500px;height:29px;background:#fff;border-bottom:1px solid #e0e0e0"></div>
<div class="a" style="left:1514px;top:413px;width:260px;height:29px;background:#fff;border-bottom:1px solid #e0e0e0"></div>
<div class="cb" style="left:20px;top:419px"></div>
<div class="td" style="left:70px;top:413px;letter-spacing:-0.35px">SYS-034.8</div>
<div class="td" style="left:250px;top:413px;letter-spacing:-0.35px">SYS-034.8</div>
<div class="td" style="left:370px;top:413px;letter-spacing:-0.15px">ITR-0282</div>
<div class="td" style="left:570px;top:413px;letter-spacing:0">Open</div>
<div class="td" style="left:770px;top:413px;letter-spacing:0">2025-11-19T13:44:10.114Z</div>
<div class="a" style="left:1278px;top:422px;width:126px;height:10px;border-radius:5px;background:#ececec;overflow:hidden"><div style="width:41.6px;height:10px;border-radius:5px;background:linear-gradient(90deg,#2f62e0,#1d4fd6)"></div></div>
<div class="a" style="left:1407px;width:50px;top:413px;height:28px;line-height:28px;font-size:11px;font-weight:bold;color:#222;text-align:right">33%</div>
<div class="a" style="left:1450px;width:50px;top:413px;height:28px;line-height:28px;font-size:11px;letter-spacing:0.6px;color:#666;text-align:right;margin-right:-0.6px">(3/9)</div>
<svg class="a" style="left:1555px;top:419px" width="17" height="15" viewBox="0 0 17 15" fill="none" stroke="#ffa414" stroke-width="1.3"><rect x="1" y="6.2" width="3.4" height="3.4" rx="0.6" fill="rgba(255,164,20,0.22)"/><rect x="10.85" y="1.85" width="4.3" height="4.3" rx="0.8" fill="rgba(255,164,20,0.22)"/><rect x="10.85" y="9.85" width="4.3" height="4.3" rx="0.8" fill="rgba(255,164,20,0.22)"/><path d="M4.4 7.9H8M10.85 4H9.4Q8 4 8 5.4V10.6Q8 12 9.4 12H10.85"/></svg>
<svg class="a" style="left:1625px;top:418px" width="18" height="18" viewBox="0 0 24 24"><path fill="rgba(0,0,0,0.09)" fill-rule="evenodd" d="M12 6c3.79 0 7.17 2.13 8.82 5.5C19.17 14.87 15.79 17 12 17s-7.17-2.13-8.82-5.5C4.83 8.13 8.21 6 12 6zM12 8.2a3.3 3.3 0 1 0 0.01 0z"/><path fill="#6a6a6a" d="M12 6c3.79 0 7.17 2.13 8.82 5.5C19.17 14.87 15.79 17 12 17s-7.17-2.13-8.82-5.5C4.83 8.13 8.21 6 12 6m0-2C7 4 2.73 7.11 1 11.5 2.73 15.89 7 19 12 19s9.27-3.11 11-7.5C21.27 7.11 17 4 12 4zm0 5c1.38 0 2.5 1.12 2.5 2.5S13.38 14 12 14s-2.5-1.12-2.5-2.5S10.62 9 12 9m0-2c-2.48 0-4.5 2.02-4.5 4.5S9.520 16 12 16s4.5-2.02 4.5-4.5S14.48 7 12 7z"/></svg>
<svg class="a" style="left:1655px;top:418px" width="15" height="17" viewBox="0 0 15 17" fill="none" stroke="#f8262b" stroke-width="1.6" stroke-linejoin="round"><path d="M4 4V2.4Q4 1.9 4.5 1.9H9.5Q10 1.9 10 2.4V4"/><path d="M0.8 4H13.8"/><path d="M1.9 4L2.3 14.2Q2.4 14.9 3.1 14.9H11.1Q11.8 14.9 11.9 14.2L12.3 4"/><path d="M5.3 7V11.9M8.6 7V11.9" stroke-width="1.5"/></svg>
<svg class="a" style="left:1682px;top:419px" width="17" height="15" viewBox="0 0 17 15"><path d="M1.2 7.7H15.2V13H1.2Z" fill="rgba(46,125,50,0.2)"/><path d="M4.6 7.7H2.2Q1.2 7.7 1.2 8.7V12Q1.2 13 2.2 13H14.2Q15.2 13 15.2 12V8.7Q15.2 7.7 14.2 7.7H11.7" fill="none" stroke="#2e7d32" stroke-width="1.6"/><path d="M8 0.2V7.6" stroke="#5a9a5d" stroke-width="1.6"/><path d="M4.2 4.4L8 7.9 11.8 4.4" fill="none" stroke="#2e7d32" stroke-width="1.5"/><path d="M11.4 10.2L13 10.2 12.8 11.6Z" fill="#2e7d32"/></svg>
<svg class="a" style="left:1710px;top:421px" width="14" height="13" viewBox="0 0 14 13"><path d="M1.6 11.2V6.1A5.4 5.15 0 1 1 7 11.2Z" fill="rgba(42,120,214,0.18)" stroke="#2a78d6" stroke-width="1.3" stroke-linejoin="round"/><path d="M4.3 5.3H9.5M4.3 7.4H9.5" stroke="#2a78d6" stroke-width="1.1"/></svg>
<div class="a" style="left:14px;top:442px;width:1500px;height:29px;background:#f3f0fa;border-bottom:1px solid #e0e0e0"></div>
<div class="a" style="left:1514px;top:442px;width:260px;height:29px;background:#fff;border-bottom:1px solid #e0e0e0"></div>
<div class="cb" style="left:20px;top:448px"></div>
<div class="td" style="left:70px;top:442px;letter-spacing:-0.35px">SYS-034.7</div>
<div class="td" style="left:250px;top:442px;letter-spacing:-0.35px">SYS-034.7</div>
<div class="td" style="left:370px;top:442px;letter-spacing:-0.15px">ITR-0281</div>
<div class="td" style="left:570px;top:442px;letter-spacing:0">Not Started</div>
<div class="td" style="left:770px;top:442px;letter-spacing:0">2025-11-19T13:43:31.681Z</div>
<div class="a" style="left:1278px;top:451px;width:126px;height:10px;border-radius:5px;background:#ececec;overflow:hidden"><div style="width:1.4px;height:4.6px;margin-top:2.7px;border-radius:50%;background:#3b66e2"></div></div>
<div class="a" style="left:1407px;width:50px;top:442px;height:28px;line-height:28px;font-size:11px;font-weight:bold;color:#222;text-align:right">0%</div>
<div class="a" style="left:1450px;width:50px;top:442px;height:28px;line-height:28px;font-size:11px;letter-spacing:0.6px;color:#666;text-align:right;margin-right:-0.6px">(0/9)</div>
<svg class="a" style="left:1555px;top:448px" width="17" height="15" viewBox="0 0 17 15" fill="none" stroke="#ffa414" stroke-width="1.3"><rect x="1" y="6.2" width="3.4" height="3.4" rx="0.6" fill="rgba(255,164,20,0.22)"/><rect x="10.85" y="1.85" width="4.3" height="4.3" rx="0.8" fill="rgba(255,164,20,0.22)"/><rect x="10.85" y="9.85" width="4.3" height="4.3" rx="0.8" fill="rgba(255,164,20,0.22)"/><path d="M4.4 7.9H8M10.85 4H9.4Q8 4 8 5.4V10.6Q8 12 9.4 12H10.85"/></svg>
<svg class="a" style="left:1625px;top:447px" width="18" height="18" viewBox="0 0 24 24"><path fill="rgba(0,0,0,0.09)" fill-rule="evenodd" d="M12 6c3.79 0 7.17 2.13 8.82 5.5C19.17 14.87 15.79 17 12 17s-7.17-2.13-8.82-5.5C4.83 8.13 8.21 6 12 6zM12 8.2a3.3 3.3 0 1 0 0.01 0z"/><path fill="#6a6a6a" d="M12 6c3.79 0 7.17 2.13 8.82 5.5C19.17 14.87 15.79 17 12 17s-7.17-2.13-8.82-5.5C4.83 8.13 8.21 6 12 6m0-2C7 4 2.73 7.11 1 11.5 2.73 15.89 7 19 12 19s9.27-3.11 11-7.5C21.27 7.11 17 4 12 4zm0 5c1.38 0 2.5 1.12 2.5 2.5S13.38 14 12 14s-2.5-1.12-2.5-2.5S10.62 9 12 9m0-2c-2.48 0-4.5 2.02-4.5 4.5S9.520 16 12 16s4.5-2.02 4.5-4.5S14.48 7 12 7z"/></svg>
<svg class="a" style="left:1655px;top:447px" width="15" height="17" viewBox="0 0 15 17" fill="none" stroke="#f8262b" stroke-width="1.6" stroke-linejoin="round"><path d="M4 4V2.4Q4 1.9 4.5 1.9H9.5Q10 1.9 10 2.4V4"/><path d="M0.8 4H13.8"/><path d="M1.9 4L2.3 14.2Q2.4 14.9 3.1 14.9H11.1Q11.8 14.9 11.9 14.2L12.3 4"/><path d="M5.3 7V11.9M8.6 7V11.9" stroke-width="1.5"/></svg>
<svg class="a" style="left:1682px;top:448px" width="17" height="15" viewBox="0 0 17 15"><path d="M1.2 7.7H15.2V13H1.2Z" fill="rgba(46,125,50,0.2)"/><path d="M4.6 7.7H2.2Q1.2 7.7 1.2 8.7V12Q1.2 13 2.2 13H14.2Q15.2 13 15.2 12V8.7Q15.2 7.7 14.2 7.7H11.7" fill="none" stroke="#2e7d32" stroke-width="1.6"/><path d="M8 0.2V7.6" stroke="#5a9a5d" stroke-width="1.6"/><path d="M4.2 4.4L8 7.9 11.8 4.4" fill="none" stroke="#2e7d32" stroke-width="1.5"/><path d="M11.4 10.2L13 10.2 12.8 11.6Z" fill="#2e7d32"/></svg>
<svg class="a" style="left:1710px;top:450px" width="14" height="13" viewBox="0 0 14 13"><path d="M1.6 11.2V6.1A5.4 5.15 0 1 1 7 11.2Z" fill="rgba(42,120,214,0.18)" stroke="#2a78d6" stroke-width="1.3" stroke-linejoin="round"/><path d="M4.3 5.3H9.5M4.3 7.4H9.5" stroke="#2a78d6" stroke-width="1.1"/></svg>
<div class="a" style="left:14px;top:471px;width:1500px;height:29px;background:#fff;"></div>
<div class="a" style="left:1514px;top:471px;width:260px;height:29px;background:#fff;"></div>
<div class="cb" style="left:20px;top:477px"></div>
<div class="td" style="left:70px;top:471px;letter-spacing:-0.35px">SYS-034.6</div>
<div class="td" style="left:250px;top:471px;letter-spacing:-0.35px">SYS-034.6</div>
<div class="td" style="left:370px;top:471px;letter-spacing:-0.15px">ITR-0280</div>
<div class="td" style="left:570px;top:471px;letter-spacing:0">Not Started</div>
<div class="td" style="left:770px;top:471px;letter-spacing:0">2025-11-19T13:43:12.531Z</div>
<div class="a" style="left:1278px;top:480px;width:126px;height:10px;border-radius:5px;background:#ececec;overflow:hidden"><div style="width:1.4px;height:4.6px;margin-top:2.7px;border-radius:50%;background:#3b66e2"></div></div>
<div class="a" style="left:1407px;width:50px;top:471px;height:28px;line-height:28px;font-size:11px;font-weight:bold;color:#222;text-align:right">0%</div>
<div class="a" style="left:1450px;width:50px;top:471px;height:28px;line-height:28px;font-size:11px;letter-spacing:0.6px;color:#666;text-align:right;margin-right:-0.6px">(0/9)</div>
<svg class="a" style="left:1555px;top:477px" width="17" height="15" viewBox="0 0 17 15" fill="none" stroke="#ffa414" stroke-width="1.3"><rect x="1" y="6.2" width="3.4" height="3.4" rx="0.6" fill="rgba(255,164,20,0.22)"/><rect x="10.85" y="1.85" width="4.3" height="4.3" rx="0.8" fill="rgba(255,164,20,0.22)"/><rect x="10.85" y="9.85" width="4.3" height="4.3" rx="0.8" fill="rgba(255,164,20,0.22)"/><path d="M4.4 7.9H8M10.85 4H9.4Q8 4 8 5.4V10.6Q8 12 9.4 12H10.85"/></svg>
<svg class="a" style="left:1625px;top:476px" width="18" height="18" viewBox="0 0 24 24"><path fill="rgba(0,0,0,0.09)" fill-rule="evenodd" d="M12 6c3.79 0 7.17 2.13 8.82 5.5C19.17 14.87 15.79 17 12 17s-7.17-2.13-8.82-5.5C4.83 8.13 8.21 6 12 6zM12 8.2a3.3 3.3 0 1 0 0.01 0z"/><path fill="#6a6a6a" d="M12 6c3.79 0 7.17 2.13 8.82 5.5C19.17 14.87 15.79 17 12 17s-7.17-2.13-8.82-5.5C4.83 8.13 8.21 6 12 6m0-2C7 4 2.73 7.11 1 11.5 2.73 15.89 7 19 12 19s9.27-3.11 11-7.5C21.27 7.11 17 4 12 4zm0 5c1.38 0 2.5 1.12 2.5 2.5S13.38 14 12 14s-2.5-1.12-2.5-2.5S10.62 9 12 9m0-2c-2.48 0-4.5 2.02-4.5 4.5S9.520 16 12 16s4.5-2.02 4.5-4.5S14.48 7 12 7z"/></svg>
<svg class="a" style="left:1655px;top:476px" width="15" height="17" viewBox="0 0 15 17" fill="none" stroke="#f8262b" stroke-width="1.6" stroke-linejoin="round"><path d="M4 4V2.4Q4 1.9 4.5 1.9H9.5Q10 1.9 10 2.4V4"/><path d="M0.8 4H13.8"/><path d="M1.9 4L2.3 14.2Q2.4 14.9 3.1 14.9H11.1Q11.8 14.9 11.9 14.2L12.3 4"/><path d="M5.3 7V11.9M8.6 7V11.9" stroke-width="1.5"/></svg>
<svg class="a" style="left:1682px;top:477px" width="17" height="15" viewBox="0 0 17 15"><path d="M1.2 7.7H15.2V13H1.2Z" fill="rgba(46,125,50,0.2)"/><path d="M4.6 7.7H2.2Q1.2 7.7 1.2 8.7V12Q1.2 13 2.2 13H14.2Q15.2 13 15.2 12V8.7Q15.2 7.7 14.2 7.7H11.7" fill="none" stroke="#2e7d32" stroke-width="1.6"/><path d="M8 0.2V7.6" stroke="#5a9a5d" stroke-width="1.6"/><path d="M4.2 4.4L8 7.9 11.8 4.4" fill="none" stroke="#2e7d32" stroke-width="1.5"/><path d="M11.4 10.2L13 10.2 12.8 11.6Z" fill="#2e7d32"/></svg>
<svg class="a" style="left:1710px;top:479px" width="14" height="13" viewBox="0 0 14 13"><path d="M1.6 11.2V6.1A5.4 5.15 0 1 1 7 11.2Z" fill="rgba(42,120,214,0.18)" stroke="#2a78d6" stroke-width="1.3" stroke-linejoin="round"/><path d="M4.3 5.3H9.5M4.3 7.4H9.5" stroke="#2a78d6" stroke-width="1.1"/></svg>
<div class="a" style="left:1613px;top:176px;width:1px;height:323px;background:#888"></div>
<div class="a" style="left:1773px;top:176px;width:1px;height:323px;background:#888"></div>
<div class="a" style="left:1877px;top:239px;width:15px;height:698px;background:#fafafa"></div>
<svg class="a" style="left:1880px;top:244px" width="9" height="7" viewBox="0 0 9 7"><path d="M0.8 6.3L4.5 0.9 8.2 6.3z" fill="#888" stroke="#888" stroke-width="0.6" stroke-linejoin="round"/></svg>
<svg class="a" style="left:1880px;top:925px" width="9" height="7" viewBox="0 0 9 7"><path d="M0.8 0.7L4.5 6.1 8.2 0.7z" fill="#888" stroke="#888" stroke-width="0.6" stroke-linejoin="round"/></svg>
</body></html>
